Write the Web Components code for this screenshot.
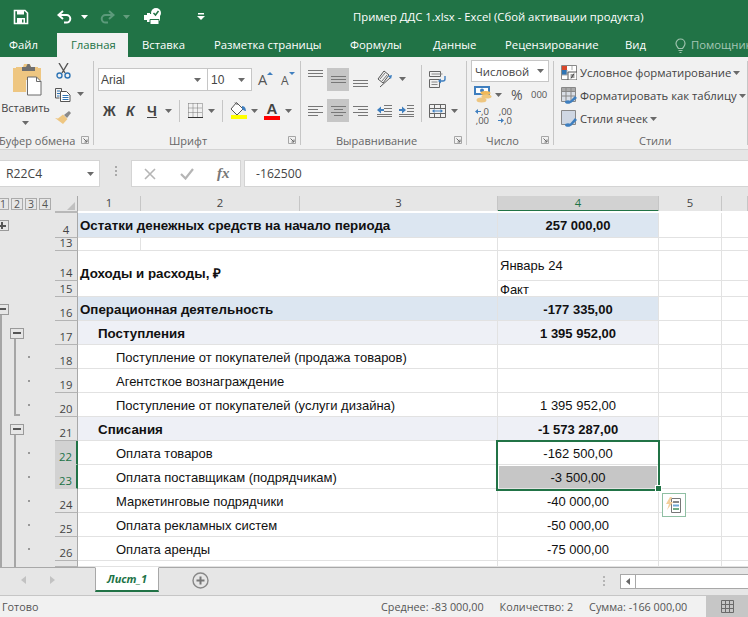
<!DOCTYPE html>
<html lang="ru">
<head>
<meta charset="utf-8">
<title>Excel</title>
<style>
  html, body { margin: 0; padding: 0; height: 100%; overflow: hidden; background: #e6e6e6; }
  body { display: flex; flex-direction: column; width: 748px; height: 617px; font-family: "Open Sans", "Liberation Sans", sans-serif; }
</style>
</head>
<body>
<excel-title-bar></excel-title-bar>
<excel-tabs></excel-tabs>
<excel-ribbon></excel-ribbon>
<excel-formula-bar></excel-formula-bar>
<excel-sheet></excel-sheet>
<excel-sheet-tabs></excel-sheet-tabs>
<excel-status-bar></excel-status-bar>

<script>
// иконки рисуем один к одному по пикселям
const GREY = "#6a6a6a";
const BLUE = "#3f7fbf";
const ICONS = {
  save: [16, 16, `<path d="M1.5 1.5h10.500l2.500 2.500v10.500h-13z" fill="none" stroke="#fff" stroke-width="1.600"/><path d="M4 1h7v4.500H4zM4 9h8v6H4z" fill="#fff"/><path d="M9 10.500h1.500v3H9z" fill="#217346"/>`],
  undo: [16, 14, `<path d="M6 1 1.500 5 6 9" fill="none" stroke="#fff" stroke-width="2"/><path d="M2 5h7.500a3.800 3.800 0 0 1 0 7.600H7" fill="none" stroke="#fff" stroke-width="2"/>`],
  redo: [16, 14, `<path d="M10 1l4.500 4L10 9" fill="none" stroke="#5c9a7b" stroke-width="2"/><path d="M14 5H6.500a3.800 3.800 0 0 0 0 7.600H9" fill="none" stroke="#5c9a7b" stroke-width="2"/>`],
  touch: [18, 17, `<path d="M0 7h3V5h3v9H3v-2H0z" fill="#fff"/><path d="M5 6h11v7H5z" fill="#fff"/><path d="M6 11.500h9v5H6z" fill="#fff" stroke="#217346"/><circle cx="12" cy="5" r="5" fill="#fff"/><path d="M9.500 5l2 2 3-4" fill="none" stroke="#217346" stroke-width="1.500"/>`],
  custom: [8, 7, `<path d="M1 0h6v1.500H1z" fill="#fff"/><path d="M0 3h8L4 7z" fill="#fff"/>`],
  caretW: [7, 4, `<path d="M0 0h7L3.500 4z" fill="#fff"/>`],
  caret: [7, 4, `<path d="M0 0h7L3.500 4z" fill="${GREY}"/>`],
  bulb: [11, 15, `<path d="M3.500 10.500C2.500 8.500 1 8 1 5.500a4.500 4.500 0 0 1 9 0c0 2.500-1.500 3-2.500 5z" fill="none" stroke="#9fc3ae" stroke-width="1.200"/><path d="M3.500 12.500h4M4.500 14.500h2" stroke="#9fc3ae" stroke-width="1.200"/>`],
  launcher: [8, 8, `<path d="M.5.500h7v7h-7z" fill="none" stroke="#a6a6a6"/><path d="M2.500 2.500 6 6M6 3.500V6H3.500" fill="none" stroke="#6a6a6a"/>`],
  paste: [29, 32, `<path d="M0 4h3v-1h7l1-3h6l1 3h7v1h3v12H13v12H0z" fill="#eec681"/><path d="M9 3h4l1.500-3h2L18 3h4v4H9z" fill="#6f6f6f"/><path d="M14.500 13h9l4.500 4.500V31H14.500z" fill="#fff" stroke="#6a6a6a"/><path d="M23.500 13v4.500H28" fill="none" stroke="#6a6a6a"/>`],
  scissors: [15, 16, `<path d="M3 0l6 10M12 0 6 10" fill="none" stroke="#555" stroke-width="1.400"/><circle cx="3.500" cy="12.500" r="2.500" fill="none" stroke="#2f75b5" stroke-width="1.400"/><circle cx="11.500" cy="12.500" r="2.500" fill="none" stroke="#2f75b5" stroke-width="1.400"/>`],
  copy: [16, 14, `<path d="M.5.500h6v3h2M.5.500v9.500h4" fill="none" stroke="#555"/><path d="M5.500 3.500h6l3.500 3.500v6.500H5.500z" fill="#fff" stroke="#555"/><path d="M2 3h3M2 5.500h3M2 8h2.500M7.500 7.500h6M7.500 9.500h6M7.500 11.500h6" stroke="#2f75b5"/>`],
  brush: [16, 13, `<path d="M9 4l5-4 2 2-4 5z" fill="#8a8a8a"/><path d="M8 3.500 12.500 8 8 13 0 7l3 .5z" fill="#eec681"/>`],
  borders: [15, 15, `<path d="M.5.500h14M.5 5h14M.5 9.500h14M.5.500v13M5 .5v13M9.500.5v13M14.500.5v13" fill="none" stroke="#777" stroke-dasharray="1 1"/><path d="M0 14.500h15" stroke="#333"/>`],
  fill: [17, 17, `<path d="M6.500.5 13 7l-6 6-6-6z" fill="#fff" stroke="#555"/><path d="M5 .5 7.500 3" stroke="#555"/><path d="M12 4c3 0 4 3 4 5-1.500 0-2.500-1-4-2z" fill="${BLUE}"/><path d="M1 13h16v4H1z" fill="#ffff00"/>`],
  lines3a: [15, 8, `<path d="M0 .5h15M0 3.500h15M0 6.500h15" stroke="#777"/>`],
  left: [15, 10, `<path d="M0 .5h15M0 3.500h10M0 6.500h15M0 9.500h10" stroke="#777"/>`],
  center: [15, 10, `<path d="M0 .5h15M3 3.500h9M0 6.500h15M3 9.500h9" stroke="#777"/>`],
  right: [15, 10, `<path d="M0 .5h15M5 3.500h10M0 6.500h15M5 9.500h10" stroke="#777"/>`],
  orient: [16, 18, `<path d="M1 9 7 1l5 4-6 8z" fill="none" stroke="#555"/><path d="M3 9l5-6M5 11l5-6" stroke="#777"/><path d="M3 17 14 7" stroke="#555"/><path d="M15 5l-1 4-3-3z" fill="${BLUE}"/>`],
  indentL: [15, 12, `<path d="M7 .5h8M7 3.500h8M7 6.500h8M0 9.500h15M0 11.500h15" stroke="#777"/><path d="M0 5l4-3.500V4h3v2H4v2.500z" fill="${BLUE}"/>`],
  indentR: [15, 12, `<path d="M8 .5h7M8 3.500h7M8 6.500h7M0 9.500h15M0 11.500h15" stroke="#777"/><path d="M7 5 3 1.500V4H0v2h3v2.500z" fill="${BLUE}"/>`],
  wrap: [17, 17, `<path d="M.5.500h11v5h-11zM.5 8.500h10v8H.5z" fill="none" stroke="#666"/><path d="M2.500 3h11M2.500 11h6M2.500 13.500h6" stroke="#888"/><path d="M16 5v3a2 2 0 0 1-2 2H10" fill="none" stroke="${BLUE}" stroke-width="1.400"/><path d="M9 10l3-2.500v5z" fill="${BLUE}"/>`],
  merge: [17, 14, `<path d="M.5.500h16v13H.5zM.5 4.500h16M.5 9.500h16M5.500.5v4M11.500.5v4M5.500 9.500v4M11.500 9.500v4" fill="none" stroke="#666"/><path d="M4 7h9" stroke="${BLUE}"/><path d="M3 7l2.500-2v4zM14 7l-2.500-2v4z" fill="${BLUE}"/>`],
  money: [18, 17, `<path d="M0 0h16v9H0z" fill="${BLUE}"/><path d="M2 2h12v5H2z" fill="#fff"/><circle cx="8" cy="4.500" r="2" fill="${BLUE}"/><ellipse cx="11.500" cy="7" rx="5" ry="2" fill="#f0b95a"/><ellipse cx="12.500" cy="10.500" rx="5" ry="2" fill="#f0c77c"/><ellipse cx="7.500" cy="14" rx="5" ry="2.500" fill="#eec681"/>`],
  arrL: [6, 5, `<path d="M0 2.500 3 0v2h3v1H3v2z" fill="${BLUE}"/>`],
  arrR: [6, 5, `<path d="M6 2.500 3 0v2H0v1h3v2z" fill="${BLUE}"/>`],
  styleCond: [16, 15, `<path d="M.5.500h15v14H.5z" fill="#fff" stroke="#888"/><path d="M1 1h5v4H1z" fill="#d8472b"/><path d="M1 5h5v5H1z" fill="#2f75b5"/><path d="M6 5v5M11 1v4M1 10h5" stroke="#aaa"/><path d="M7 7h9v8H7z" fill="#fff" stroke="#555"/><path d="M9.500 10h4M9.500 12h4M10 13.500l3-5" stroke="#444" fill="none"/>`],
  styleTable: [17, 17, `<path d="M.5.500h14v14H.5z" fill="#d9dee6" stroke="#888"/><path d="M1 1h13v3H1z" fill="#aaa"/><path d="M5 1v13M10 1v13M1 4.500h13M1 9h13" stroke="#888"/><path d="M8 15l6-6 2 2-6 5z" fill="${BLUE}"/><ellipse cx="7" cy="15" rx="3" ry="1.800" fill="${BLUE}"/>`],
  styleCell: [17, 17, `<path d="M.5.500h14v14H.5z" fill="#cfd7e3" stroke="#888"/><path d="M8 15l6-7 2 2-6 6z" fill="${BLUE}"/><ellipse cx="7" cy="15" rx="3" ry="1.800" fill="${BLUE}"/>`],
  cancel: [12, 12, `<path d="M1 1l10 10M11 1 1 11" stroke="#b5b5b5" stroke-width="1.600"/>`],
  check: [14, 12, `<path d="M1 6l4.500 4.500L13 1" fill="none" stroke="#b5b5b5" stroke-width="2.200"/>`],
  corner: [8, 8, `<path d="M8 0v8H0z" fill="#c0c0c0"/>`],
  navL: [5, 8, `<path d="M5 0v8L0 4z" fill="#c2c2c2"/>`],
  navR: [5, 8, `<path d="M0 0v8l5-4z" fill="#c2c2c2"/>`],
  add: [17, 17, `<circle cx="8.500" cy="8.500" r="7.500" fill="none" stroke="#888" stroke-width="1.400"/><path d="M8.500 4.500v8M4.500 8.500h8" stroke="#777" stroke-width="2"/>`],
  scrollL: [4, 7, `<path d="M4 0v7L0 3.500z" fill="#666"/>`],
  normal: [13, 13, `<path d="M.5.500h12v12H.5zM4.500.5v12M8.500.5v12M.5 4.500h12M.5 8.500h12" fill="none" stroke="#6a6a6a"/>`],
  analysis: [20, 20, `<path d="M7.500 3.500H16.500v14H7.500z" fill="#fff" stroke="#777"/><path d="M9 6h6v2H9z" fill="#888"/><path d="M9 9.500h6v2H9z" fill="#6fa8d6"/><path d="M9 13h6v2H9z" fill="#70ad86"/><path d="M6 2 2 9h3l-2 6 6-8H6l2-5z" fill="#f3cf9b"/>`]
};

class ExcelIcon extends HTMLElement {
  constructor() {
    super();
    this.attachShadow({ mode: "open" });
  }

  connectedCallback() {
    const [w, h, body] = ICONS[this.getAttribute("name")];
    this.shadowRoot.innerHTML = `
      <style>:host { display: block; flex: none; line-height: 0; } svg { display: block; }</style>
      <svg width="${w}" height="${h}" viewBox="0 0 ${w} ${h}">${body}</svg>`;
  }
}

class ExcelTitleBar extends HTMLElement {
  constructor() {
    super();
    this.attachShadow({ mode: "open" });
  }

  getStyles() {
    return `
    <style>
      :host { display: flex; flex: none; height: 33px; background: #217346; color: #fff; align-items: center; }
      .qat { display: flex; align-items: center; width: 353px; padding-left: 13px; box-sizing: border-box; }
      .title { font-size: 11.300px; white-space: nowrap; }
    </style>`;
  }

  render() {
    this.shadowRoot.innerHTML = `${this.getStyles()}
      <div class="qat">
        <excel-icon name="save"></excel-icon>
        <excel-icon name="undo" style="margin-left:28px"></excel-icon>
        <excel-icon name="caretW" style="margin-left:8px"></excel-icon>
        <excel-icon name="redo" style="margin-left:11px"></excel-icon>
        <excel-icon name="caretW" style="margin-left:8px;opacity:.3"></excel-icon>
        <excel-icon name="touch" style="margin-left:14px"></excel-icon>
        <excel-icon name="custom" style="margin-left:35px"></excel-icon>
      </div>
      <div class="title">Пример ДДС 1.xlsx - Excel (Сбой активации продукта)</div>`;
  }

  connectedCallback() {
    this.render();
  }
}

class ExcelTabs extends HTMLElement {
  constructor() {
    super();
    this.attachShadow({ mode: "open" });
  }

  getStyles() {
    return `
    <style>
      :host { display: flex; flex: none; height: 24px; background: #217346; color: #fff; font-size: 11.300px; line-height: 24px; overflow: hidden; white-space: nowrap; }
      div { padding-left: 14px; box-sizing: border-box; flex: none; }
      .file { padding-left: 9px; }
      .on { background: #f1f1f1; color: #217346; }
      .help { display: flex; align-items: center; gap: 5px; color: #a6c7b5; }
    </style>`;
  }

  render() {
    const tabs = [["Главная", 71, "on"], ["Вставка", 72], ["Разметка страницы", 136], ["Формулы", 83], ["Данные", 72], ["Рецензирование", 120], ["Вид", 50]];
    this.shadowRoot.innerHTML = `${this.getStyles()}
      <div class="file" style="width:57px">Файл</div>
      ${tabs.map(t => `<div class="${t[2] || ""}" style="width:${t[1]}px">${t[0]}</div>`).join("")}
      <div class="help"><excel-icon name="bulb"></excel-icon>Помощник</div>`;
  }

  connectedCallback() {
    this.render();
  }
}

class RibbonGroup extends HTMLElement {
  constructor() {
    super();
    this.attachShadow({ mode: "open" });
  }

  connectedCallback() {
    const launcher = this.hasAttribute("launcher") ? `<excel-icon name="launcher"></excel-icon>` : "";
    this.shadowRoot.innerHTML = `
    <style>
      :host { display: flex; flex-direction: column; flex: none; box-sizing: border-box; height: 92px; position: relative; }
      :host::after { content: ""; position: absolute; right: 0; top: 4px; bottom: 4px; width: 1px; background: #c6c6c6; }
      .body { flex: 1; min-height: 0; }
      .label { display: flex; align-items: center; height: 18px; color: #666; font-size: 11px; white-space: nowrap; padding-right: 5px; }
      .label span { margin-left: var(--pad, 0); }
      .label excel-icon { margin-left: auto; }
    </style>
    <div class="body"><slot></slot></div>
    <div class="label"><span>${this.getAttribute("label")}</span>${launcher}</div>`;
  }
}

class ExcelRibbon extends HTMLElement {
  constructor() {
    super();
    this.attachShadow({ mode: "open" });
  }

  getStyles() {
    return `
    <style>
      :host { display: flex; flex: none; height: 93px; background: #f1f1f1; border-bottom: 1px solid #d4d4d4; box-sizing: border-box; overflow: hidden; color: #444; font-size: 11.300px; }
      .row { display: flex; align-items: center; }
      .col { display: flex; flex-direction: column; }
      .box { display: flex; align-items: center; justify-content: space-between; box-sizing: border-box; background: #fff; border: 1px solid #c6c6c6; padding: 0 6px 0 2px; white-space: nowrap; }
      .arial { font: 12px "Liberation Sans", sans-serif; }
      .on { display: flex; align-items: center; justify-content: center; width: 22px; height: 23px; background: #c6c6c6; flex: none; }
      .sep { width: 1px; background: #c6c6c6; flex: none; }
      .glyph { font-family: "Liberation Sans", sans-serif; font-weight: bold; color: #444; line-height: 1; }
      .style-row { display: flex; align-items: center; height: 23px; gap: 2px; white-space: nowrap; }
      .tri { width: 0; height: 0; border-left: 3px solid transparent; border-right: 3px solid transparent; }
      .dec { width: 15px; font-size: 9.500px; line-height: 9px; color: #555; }
      .dec div { display: flex; align-items: center; justify-content: flex-end; height: 9px; }
    </style>`;
  }

  render() {
    this.shadowRoot.innerHTML = `${this.getStyles()}
      <ribbon-group label="Буфер обмена" launcher style="width:94px;--pad:-1px">
        <div class="row" style="align-items:flex-start">
          <div class="col" style="width:51px;align-items:center;padding-top:7px">
            <excel-icon name="paste" style="margin-left:4px"></excel-icon>
            <div style="margin-top:3px;line-height:17px;font-size:11px">Вставить</div>
            <excel-icon name="caret" style="margin-top:5px"></excel-icon>
          </div>
          <div class="col" style="padding:6px 0 0 4px">
            <excel-icon name="scissors" style="margin-left:1px"></excel-icon>
            <div class="row" style="margin-top:9px"><excel-icon name="copy"></excel-icon><excel-icon name="caret" style="margin-left:6px;margin-top:-2px"></excel-icon></div>
            <excel-icon name="brush" style="margin-top:9px"></excel-icon>
          </div>
        </div>
      </ribbon-group>

      <ribbon-group label="Шрифт" launcher style="width:207px;--pad:75px">
        <div style="padding:11px 0 0 4px">
          <div class="row">
            <div class="box arial" style="width:110px;height:23px">Arial<excel-icon name="caret"></excel-icon></div>
            <div class="box arial" style="width:44px;height:23px;border-left:0;padding-left:3px">10<excel-icon name="caret"></excel-icon></div>
            <div class="row" style="margin-left:6px;width:20px;align-items:flex-start"><span style="font-size:14.500px;color:#555;line-height:15px">A</span><span class="tri" style="border-bottom:3px solid #3f7fbf;margin-left:0"></span></div>
            <div class="row" style="margin-left:3px;align-items:flex-start"><span style="font-size:12px;color:#555;line-height:15px;margin-top:1px">A</span><span class="tri" style="border-top:3px solid #3f7fbf;margin-left:0"></span></div>
          </div>
          <div class="row" style="margin-top:8px;height:23px">
            <span class="glyph" style="font-size:14px;margin-left:5px;width:14px">Ж</span>
            <span class="glyph" style="font-size:14px;font-style:italic;margin-left:9px;width:9px">К</span>
            <span class="glyph" style="font-size:14px;margin-left:12px;text-decoration:underline;width:12px">Ч</span>
            <excel-icon name="caret" style="margin-left:6px"></excel-icon>
            <div class="sep" style="height:22px;margin-left:7px"></div>
            <excel-icon name="borders" style="margin-left:8px"></excel-icon>
            <excel-icon name="caret" style="margin-left:5px"></excel-icon>
            <div class="sep" style="height:22px;margin-left:7px"></div>
            <excel-icon name="fill" style="margin-left:7px"></excel-icon>
            <excel-icon name="caret" style="margin-left:4px"></excel-icon>
            <div style="margin-left:6px;width:16px;text-align:center"><div class="glyph" style="font-size:15px">A</div><div style="height:4px;background:#ff0000"></div></div>
            <excel-icon name="caret" style="margin-left:5px"></excel-icon>
          </div>
        </div>
      </ribbon-group>

      <ribbon-group label="Выравнивание" launcher style="width:166px;--pad:35px">
        <div class="row" style="padding:11px 0 0 7px;align-items:flex-start">
          <div class="col">
            <div class="row" style="height:23px;align-items:flex-start">
              <excel-icon name="lines3a" style="margin-top:2px"></excel-icon>
              <div class="on" style="margin-left:4px"><excel-icon name="lines3a"></excel-icon></div>
              <excel-icon name="lines3a" style="margin-left:4px;margin-top:12px"></excel-icon>
              <excel-icon name="orient" style="margin-left:9px;margin-top:2px"></excel-icon>
              <excel-icon name="caret" style="margin-left:6px;margin-top:9px"></excel-icon>
            </div>
            <div class="row" style="margin-top:8px;height:23px">
              <excel-icon name="left"></excel-icon>
              <div class="on" style="margin-left:4px"><excel-icon name="center"></excel-icon></div>
              <excel-icon name="right" style="margin-left:4px"></excel-icon>
              <excel-icon name="indentL" style="margin-left:9px"></excel-icon>
              <excel-icon name="indentR" style="margin-left:7px"></excel-icon>
            </div>
          </div>
          <div class="sep" style="height:57px;margin:-3px 0 0 7px"></div>
          <div class="col" style="margin-left:7px">
            <excel-icon name="wrap" style="margin-top:3px"></excel-icon>
            <div class="row" style="margin-top:16px"><excel-icon name="merge"></excel-icon><excel-icon name="caret" style="margin-left:5px"></excel-icon></div>
          </div>
        </div>
      </ribbon-group>

      <ribbon-group label="Число" launcher style="width:87px;--pad:19px">
        <div style="padding:3px 0 0 4px">
          <div class="box" style="width:78px;height:22px;padding:0 4px 0 3px">Числовой<excel-icon name="caret"></excel-icon></div>
          <div class="row" style="margin-top:4px;padding-left:3px;height:17px">
            <excel-icon name="money"></excel-icon>
            <excel-icon name="caret" style="margin-left:3px"></excel-icon>
            <span style="font-size:14px;margin-left:9px;color:#555;line-height:17px;width:15px">%</span>
            <span style="font-size:9.500px;margin-left:5px;color:#555">000</span>
          </div>
          <div class="row" style="margin-top:4px;padding-left:3px;gap:8px">
            <div class="dec"><div><excel-icon name="arrL"></excel-icon>,0</div><div>,00</div></div>
            <div class="dec"><div>,00</div><div><excel-icon name="arrR"></excel-icon>,0</div></div>
          </div>
        </div>
      </ribbon-group>

      <ribbon-group label="Стили" style="width:194px;--pad:85px">
        <div class="col" style="padding:4px 0 0 7px">
          <div class="style-row"><excel-icon name="styleCond" style="margin-right:1px"></excel-icon><span>Условное форматирование</span><excel-icon name="caret"></excel-icon></div>
          <div class="style-row"><excel-icon name="styleTable"></excel-icon><span>Форматировать как таблицу</span><excel-icon name="caret"></excel-icon></div>
          <div class="style-row"><excel-icon name="styleCell"></excel-icon><span>Стили ячеек</span><excel-icon name="caret"></excel-icon></div>
        </div>
      </ribbon-group>`;
  }

  connectedCallback() {
    this.render();
  }
}

class ExcelFormulaBar extends HTMLElement {
  constructor() {
    super();
    this.attachShadow({ mode: "open" });
  }

  getStyles() {
    return `
    <style>
      :host { display: flex; flex: none; height: 46px; padding-top: 10px; box-sizing: border-box; align-items: flex-start; background: #e6e6e6; color: #444; font-size: 12.200px; }
      .f { display: flex; align-items: center; height: 27px; box-sizing: border-box; background: #fff; border: 1px solid #d4d4d4; }
      .name { width: 100px; padding: 0 5px 0 6px; justify-content: space-between; border-left: 0; }
      .grip { display: flex; flex-direction: column; gap: 2px; margin: 6px 14px 0 15px; }
      .grip i { width: 2px; height: 2px; background: #aaa; }
      .btns { width: 110px; padding-left: 12px; }
      .fx { font: italic bold 15px "Liberation Serif", serif; color: #777; margin-left: 23px; }
      .input { flex: 1; margin-left: 3px; padding-left: 11px; border-right: 0; }
    </style>`;
  }

  render() {
    this.shadowRoot.innerHTML = `${this.getStyles()}
      <div class="f name"><span>R22C4</span><excel-icon name="caret"></excel-icon></div>
      <div class="grip"><i></i><i></i><i></i></div>
      <div class="f btns"><excel-icon name="cancel"></excel-icon><excel-icon name="check" style="margin-left:24px"></excel-icon><span class="fx">fx</span></div>
      <div class="f input">-162500</div>`;
  }

  connectedCallback() {
    this.render();
  }
}

class SheetRow extends HTMLElement {
  constructor() {
    super();
    this.attachShadow({ mode: "open" });
  }

  getStyles() {
    return `
    <style>
      :host { display: grid; grid-template-columns: 55px 23px 420px 161px 63px 1fr; grid-template-rows: var(--h); height: var(--h); background: #fff; font: 13px "Liberation Sans", sans-serif; color: #111; }
      .gutter { display: flex; align-items: center; background: #e6e6e6; }
      .t1 { width: 10px; height: 100%; flex: none; display: flex; align-items: center; }
      .t2 { width: 14px; height: 100%; flex: none; display: flex; align-items: center; }
      .t1.line { background: linear-gradient(#a6a6a6, #a6a6a6) 0 0 / 2px 100% no-repeat; }
      .t1.stem { background: linear-gradient(#a6a6a6, #a6a6a6) 0 100% / 2px 50% no-repeat; }
      .t2.line { background: linear-gradient(#a6a6a6, #a6a6a6) 4px 0 / 2px 100% no-repeat; }
      .t2.stem { background: linear-gradient(#a6a6a6, #a6a6a6) 4px 100% / 2px 50% no-repeat; }
      .t2.hook { background: linear-gradient(#a6a6a6, #a6a6a6) 4px 0 / 2px calc(100% - 1px) no-repeat, linear-gradient(#a6a6a6, #a6a6a6) 4px calc(100% - 1px) / 6px 2px no-repeat; }
      .btn { width: 14px; height: 11px; box-sizing: border-box; flex: none; border: 1px solid #9a9a9a; background: #e6e6e6 linear-gradient(#555, #555) center / 8px 2px no-repeat; position: relative; }
      .t1 .btn { margin-left: -5px; }
      .plus::after { content: ""; position: absolute; left: 5px; top: 1px; width: 2px; height: 7px; background: #555; }
      .dot { width: 2px; height: 2px; margin-left: 4px; background: #999; flex: none; }
      .num { background: #e6e6e6; border-right: 1px solid #a8a8a8; border-bottom: 1px solid #b4b4b4; box-sizing: border-box; display: flex; align-items: flex-end; justify-content: center; font: 11.300px "Open Sans", sans-serif; color: #444; line-height: 10px; padding-bottom: 2px; overflow: hidden; }
      .num.sel { background: #d2d2d2; color: #217346; border-right: 2px solid #217346; border-bottom-color: #d2d2d2; }
      .c { box-sizing: border-box; padding-top: var(--top); border-bottom: 1px solid #e2e2e2; border-right: 1px solid #e2e2e2; background: var(--fill, #fff); display: flex; align-items: center; white-space: nowrap; overflow: hidden; min-height: 0; }
      .text { padding-left: var(--pad); }
      .text.bold { font-size: 13.330px; }
      .low { align-items: flex-start; padding-top: 13px; }
      .value { justify-content: center; }
      .value.left { justify-content: flex-start; padding-left: 2px; }
      .e { background: #fff; }
      .bold { font-weight: bold; }
      .nogrid { border-bottom-color: #fff; }
      .split { background: linear-gradient(#e2e2e2, #e2e2e2) 62px 0 / 1px 100% no-repeat #fff; }
    </style>`;
  }

  getGutter() {
    // g = "уровень1 уровень2": p плюс, m минус с линией вниз, l линия, ld линия с точкой, hd уголок с точкой
    const g = (this.getAttribute("g") || "- -").split(" ");
    const t1 = g[0] === "m" ? "stem" : g[0] === "l" ? "line" : "";
    const t2 = g[1] === "m" ? "stem" : g[1] === "l" || g[1] === "ld" ? "line" : g[1] === "hd" ? "hook" : "";
    const b1 = g[0] === "m" ? `<span class="btn"></span>` : g[0] === "p" ? `<span class="btn plus"></span>` : "";
    const b2 = g[1] === "m" ? `<span class="btn"></span>` : "";
    const dot = g[1] === "ld" || g[1] === "hd" ? `<span class="dot"></span>` : "";
    return `<div class="gutter"><div class="t1 ${t1}">${b1}</div><div class="t2 ${t2}">${b2}</div>${dot}</div>`;
  }

  render() {
    const left = this.hasAttribute("left");
    const bold = this.hasAttribute("bold") ? "bold" : "";
    const sel = this.hasAttribute("sel") ? "sel" : "";
    const low = this.hasAttribute("low") ? "low nogrid" : "";
    const split = this.hasAttribute("split") ? "split" : "";
    this.style.setProperty("--h", this.getAttribute("h") + "px");
    this.style.setProperty("--top", this.hasAttribute("flat") ? "0" : "2px");
    if (this.getAttribute("fill")) this.style.setProperty("--fill", this.getAttribute("fill"));
    this.style.setProperty("--pad", (this.getAttribute("pad") || "2") + "px");
    this.shadowRoot.innerHTML = `${this.getStyles()}
      ${this.getGutter()}
      <div class="num ${sel}">${this.getAttribute("n") || ""}</div>
      <div class="c text ${bold} ${low} ${split}"><slot></slot></div>
      <div class="c value ${left ? "left" : bold}">${this.getAttribute("value") || ""}</div>
      <div class="c e"></div>
      <div class="c e" style="border-right:0"></div>`;
  }

  connectedCallback() {
    this.render();
  }
}

class ExcelSheet extends HTMLElement {
  constructor() {
    super();
    this.attachShadow({ mode: "open" });
  }

  getStyles() {
    return `
    <style>
      :host { display: block; flex: none; height: 371px; overflow: hidden; position: relative; background: #fff; }
      .head { display: grid; grid-template-columns: 55px 23px 63px 159px 198px 161px 63px 1fr; height: 15px; font: 11.300px "Open Sans", sans-serif; color: #444; line-height: 14px; text-align: center; }
      .head > div { background: #e6e6e6; box-sizing: border-box; border-right: 1px solid #c6c6c6; border-bottom: 1px solid #a8a8a8; }
      .head .levels { display: flex; align-items: flex-start; gap: 2px; border: 0; }
      .levels span { width: 12px; height: 12px; margin-top: 2px; box-sizing: border-box; border: 1px solid #ababab; font-size: 10.500px; line-height: 10px; color: #555; flex: none; }
      .head .corner { display: flex; align-items: flex-end; justify-content: flex-end; padding: 0 2px 1px 0; border-right-color: #a8a8a8; }
      .head .sel { background: #d2d2d2; color: #217346; border-bottom: 2px solid #217346; }
      .strip { display: grid; grid-template-columns: 55px 23px 1fr; height: 2px; }
      .strip i { background: #e6e6e6; }
      .strip i + i { background: #b8b8b8; }
      .strip i + i + i { background: #fff; }
      /* рамка выделения лежит поверх ячеек */
      .selection { position: absolute; left: 496px; top: 244px; width: 164px; height: 51px; box-sizing: border-box; border: 2px solid #217346; pointer-events: none; }
      .selection::before { content: ""; position: absolute; left: 1px; right: 1px; bottom: 1px; height: 22px; background: #c6c6c6; }
      .selection span { position: absolute; left: 0; right: 0; bottom: 4px; text-align: center; font: 13px "Liberation Sans", sans-serif; color: #111; }
      .handle { position: absolute; left: 655px; top: 289px; width: 5px; height: 5px; background: #217346; border: 1px solid #fff; }
      .qa { position: absolute; left: 662px; top: 297px; width: 24px; height: 24px; box-sizing: border-box; border: 1px solid #8fbfa3; background: #fff; display: flex; align-items: center; justify-content: center; }
    </style>`;
  }

  render() {
    this.shadowRoot.innerHTML = `${this.getStyles()}
      <div class="head">
        <div class="levels"><span style="margin-left:-3px">1</span><span>2</span><span>3</span><span>4</span></div>
        <div class="corner"><excel-icon name="corner"></excel-icon></div>
        <div>1</div><div>2</div><div>3</div><div class="sel">4</div><div>5</div><div></div>
      </div>
      <div class="strip"><i></i><i></i><i></i></div>
      <sheet-row n="4" h="25" flat g="p -" bold fill="#dce6f1" value="257 000,00">Остатки денежных средств на начало периода</sheet-row>
      <sheet-row n="13" h="13" flat split></sheet-row>
      <sheet-row n="14" h="30" flat bold low value="Январь 24" left>Доходы и расходы, ₽</sheet-row>
      <sheet-row n="15" h="16" value="Факт" left></sheet-row>
      <sheet-row n="16" h="24" g="m -" bold fill="#dce6f1" value="-177 335,00">Операционная деятельность</sheet-row>
      <sheet-row n="17" h="24" g="l m" bold fill="#eef0f6" pad="20" value="1 395 952,00">Поступления</sheet-row>
      <sheet-row n="18" h="24" g="l ld" pad="38">Поступление от покупателей (продажа товаров)</sheet-row>
      <sheet-row n="19" h="24" g="l ld" pad="38">Агентсткое вознаграждение</sheet-row>
      <sheet-row n="20" h="24" g="l hd" pad="38" value="1 395 952,00">Поступление от покупателей (услуги дизайна)</sheet-row>
      <sheet-row n="21" h="24" g="l m" bold fill="#eef0f6" pad="20" value="-1 573 287,00">Списания</sheet-row>
      <sheet-row n="22" h="24" g="l ld" pad="38" sel value="-162 500,00">Оплата товаров</sheet-row>
      <sheet-row n="23" h="24" g="l ld" pad="38" sel>Оплата поставщикам (подрядчикам)</sheet-row>
      <sheet-row n="24" h="24" g="l ld" pad="38" value="-40 000,00">Маркетинговые подрядчики</sheet-row>
      <sheet-row n="25" h="24" g="l ld" pad="38" value="-50 000,00">Оплата рекламных систем</sheet-row>
      <sheet-row n="26" h="24" g="l ld" pad="38" value="-75 000,00">Оплата аренды</sheet-row>
      <sheet-row h="6" g="l l"></sheet-row>
      <div class="selection"><span>-3 500,00</span></div>
      <div class="handle"></div>
      <div class="qa"><excel-icon name="analysis"></excel-icon></div>`;
  }

  connectedCallback() {
    this.render();
  }
}

class ExcelSheetTabs extends HTMLElement {
  constructor() {
    super();
    this.attachShadow({ mode: "open" });
  }

  getStyles() {
    return `
    <style>
      :host { display: flex; flex: none; height: 29px; box-sizing: border-box; background: #e6e6e6; border-top: 1px solid #a8a8a8; border-bottom: 1px solid #c6c6c6; align-items: flex-start; }
      .tab { margin: -1px 0 0 20px; width: 64px; height: 25px; box-sizing: border-box; background: #fff; border: 1px solid #a8a8a8; border-top: 1px solid #fff; border-bottom: 2px solid #217346; color: #217346; font: italic bold 11px/22px "Open Sans", sans-serif; text-align: center; }
      .nav { display: flex; gap: 24px; margin: 8px 0 0 21px; width: 54px; }
      .add { margin: 4px 0 0 33px; }
      .grip { display: flex; flex-direction: column; gap: 2px; margin: 8px 0 0 394px; }
      .grip i { width: 2px; height: 2px; background: #b5b5b5; }
      .scroll { display: flex; margin: 6px 0 0 15px; flex: 1; height: 15px; box-sizing: border-box; border: 1px solid #a8a8a8; border-right: 0; background: #fff; }
      .scroll div { width: 14px; display: flex; align-items: center; justify-content: center; border-right: 1px solid #a8a8a8; background: #fff; }
    </style>`;
  }

  render() {
    this.shadowRoot.innerHTML = `${this.getStyles()}
      <div class="nav"><excel-icon name="navL"></excel-icon><excel-icon name="navR"></excel-icon></div>
      <div class="tab">Лист_1</div>
      <div class="add"><excel-icon name="add"></excel-icon></div>
      <div class="grip"><i></i><i></i><i></i></div>
      <div class="scroll"><div><excel-icon name="scrollL"></excel-icon></div></div>`;
  }

  connectedCallback() {
    this.render();
  }
}

class ExcelStatusBar extends HTMLElement {
  constructor() {
    super();
    this.attachShadow({ mode: "open" });
  }

  getStyles() {
    return `
    <style>
      :host { display: flex; flex: 1; background: #f1f1f1; color: #555; font-size: 10.800px; align-items: stretch; white-space: nowrap; }
      span { align-self: center; }
      .ready { margin-left: 2px; width: 379px; }
      .view { margin-left: auto; width: 42px; background: #c6c6c6; display: flex; align-items: center; justify-content: center; }
    </style>`;
  }

  render() {
    this.shadowRoot.innerHTML = `${this.getStyles()}
      <span class="ready">Готово</span>
      <span>Среднее: -83 000,00</span>
      <span style="margin-left:16px">Количество: 2</span>
      <span style="margin-left:16px">Сумма: -166 000,00</span>
      <div class="view"><excel-icon name="normal"></excel-icon></div>`;
  }

  connectedCallback() {
    this.render();
  }
}

customElements.define("excel-icon", ExcelIcon);
customElements.define("excel-title-bar", ExcelTitleBar);
customElements.define("excel-tabs", ExcelTabs);
customElements.define("ribbon-group", RibbonGroup);
customElements.define("excel-ribbon", ExcelRibbon);
customElements.define("excel-formula-bar", ExcelFormulaBar);
customElements.define("sheet-row", SheetRow);
customElements.define("excel-sheet", ExcelSheet);
customElements.define("excel-sheet-tabs", ExcelSheetTabs);
customElements.define("excel-status-bar", ExcelStatusBar);
</script>
</body>
</html>
